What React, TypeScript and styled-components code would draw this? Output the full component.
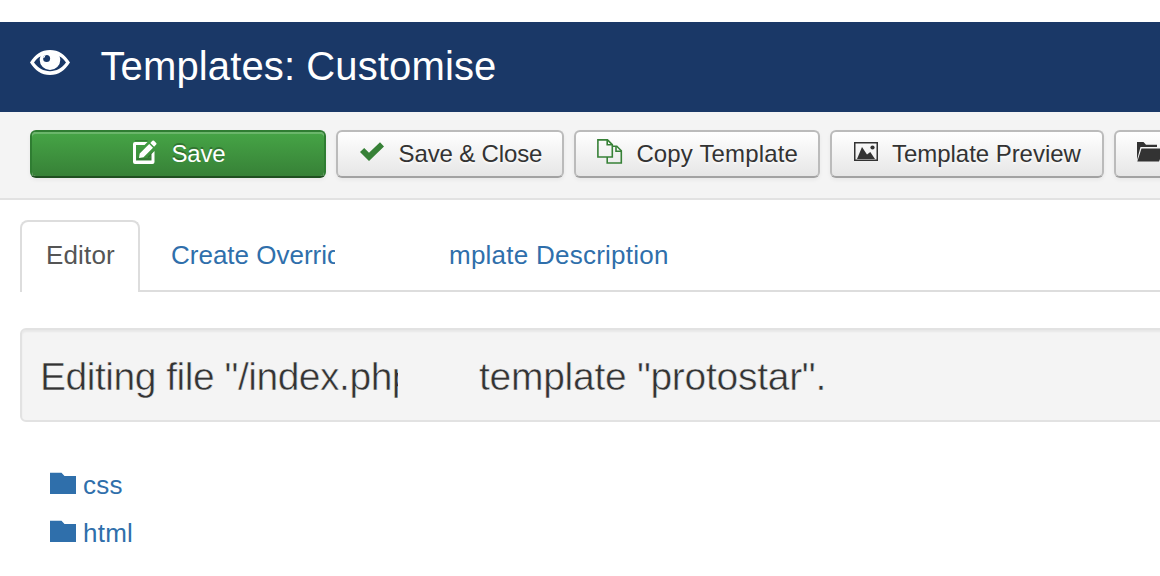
import React from 'react';
import styled, { createGlobalStyle, css } from 'styled-components';

const GlobalStyle = createGlobalStyle`
  * { box-sizing: border-box; }
  html, body { margin: 0; padding: 0; }
  body {
    background: #fff;
    color: #333;
    font-family: "Liberation Sans", Arial, Helvetica, sans-serif;
    font-size: 26px;
    overflow: hidden;
  }
`;

const Page = styled.div`
  width: 1160px;
  height: 576px;
  padding-top: 22px;
  overflow: hidden;
`;

const Header = styled.header`
  display: flex;
  align-items: flex-start;
  height: 90px;
  padding-left: 30px;
  background: #1a3867;
  color: #fff;
`;

const EyeSlot = styled.span`
  display: flex;
  width: 70.5px;
  padding-top: 28px;
`;

const Title = styled.h1`
  margin: 0;
  font-size: 40px;
  font-weight: 400;
  line-height: 88px;
  letter-spacing: 0.12px;
  white-space: nowrap;
`;

const Toolbar = styled.div`
  display: flex;
  gap: 10px;
  height: 88px;
  padding: 18px 0 0 30px;
  background: #f4f4f4;
  border-bottom: 2px solid #e2e2e2;
`;

const Button = styled.button<{ $width: number; $pad: number; $primary?: boolean }>`
  display: flex;
  flex: none;
  align-items: flex-start;
  width: ${(p) => p.$width}px;
  height: 48px;
  margin: 0;
  padding: 0 0 0 ${(p) => p.$pad - 2}px;
  border: 2px solid #bbb;
  border-bottom-color: #a2a2a2;
  border-radius: 6px;
  background: linear-gradient(to bottom, #fff, #e6e6e6) padding-box;
  box-shadow: inset 0 2px 0 rgba(255, 255, 255, 0.2), 0 2px 4px rgba(0, 0, 0, 0.05);
  color: #333;
  font: inherit;
  font-size: 24px;
  line-height: 44px;
  text-shadow: 0 2px 2px rgba(255, 255, 255, 0.75);
  ${(p) =>
    p.$primary &&
    css`
      border-color: #2f7d32;
      border-bottom-color: #1f4f20;
      background: linear-gradient(to bottom, #46a546, #378137) padding-box;
      color: #fff;
      text-shadow: 0 -2px 0 rgba(0, 0, 0, 0.25);
    `}
`;

const ButtonIcon = styled.span<{ $slot: number; $top: number }>`
  display: flex;
  flex: none;
  width: ${(p) => p.$slot}px;
  padding-top: ${(p) => p.$top}px;
`;

const Label = styled.span<{ $spacing?: number }>`
  letter-spacing: ${(p) => p.$spacing ?? 0}px;
  white-space: nowrap;
`;

const Tabs = styled.nav`
  display: flex;
  height: 72px;
  margin: 20px 0 0 20px;
  box-shadow: inset 0 -2px 0 #ddd;
  line-height: 66px;
`;

const ActiveTab = styled.a`
  width: 120px;
  padding-left: 24px;
  border: 2px solid #ddd;
  border-bottom: 0;
  border-radius: 8px 8px 0 0;
  background: #fff;
  color: #555;
`;

const TabLink = styled.a<{ $width: number; $gap: number }>`
  width: ${(p) => p.$width}px;
  height: 68px;
  margin-left: ${(p) => p.$gap}px;
  padding-top: 2px;
  overflow: hidden;
  color: #2f6fab;
`;

const Well = styled.section`
  display: flex;
  height: 94px;
  margin: 36px -10px 0 20px;
  padding-left: 18px;
  border: 2px solid #e2e2e2;
  border-radius: 6px;
  background: #f4f4f4;
  box-shadow: inset 0 2px 2px rgba(0, 0, 0, 0.05);
  font-size: 39px;
  line-height: 93px;
`;

const WellText = styled.span<{ $width: number; $spacing: number; $gap?: number }>`
  flex: none;
  width: ${(p) => p.$width}px;
  height: 90px;
  margin-left: ${(p) => p.$gap ?? 0}px;
  overflow: hidden;
  letter-spacing: ${(p) => p.$spacing}px;
  white-space: nowrap;
  -webkit-text-stroke: 0.5px #f4f4f4;
`;

const Tree = styled.ul`
  margin: 39px 0 0;
  padding: 0 0 0 50px;
  list-style: none;
`;

const TreeItem = styled.li`
  display: flex;
  height: 48px;
  color: #2f6fab;
  line-height: 48px;
`;

const FolderSlot = styled.span`
  display: flex;
  width: 33px;
  padding-top: 11px;
`;

const EyeIcon = () => (
  <svg width="40" height="26" viewBox="0 0 40 26">
    <path
      fill="#fff"
      fillRule="evenodd"
      d="M0 12.5C5 4.500 11.500 0 20 0S35 4.500 40 12.500C35 20.500 28.500 25 20 25S5 20.500 0 12.500ZM4 12.500C8.200 18 13.500 21.200 20 21.200S31.800 18 36 12.500C34.400 10 32.200 7.600 29.400 6.200Q30.300 8 30.300 10A10.300 10 0 0 1 9.700 10Q9.700 8 10.600 6.200C7.800 7.600 5.600 10 4 12.500Z"
    />
    <circle cx="16.600" cy="8.500" r="3.500" fill="#1a3867" />
    <path d="M13.100 8.500A3.500 3.500 0 0 1 16.600 5A2 2 0 0 0 14.800 7.200Z" fill="#fff" />
  </svg>
);

const EditIcon = () => (
  <svg width="24" height="25" viewBox="0 0 24 25">
    <path d="M14.500 1H2M15 18L18.500 14.500V19.500H4" transform="translate(0 -.5)" fill="none" stroke="#000" strokeOpacity=".2" strokeWidth="1.600" />
    <path
      fill="#fff"
      d="M2 2H14.500L11.500 5H3V20.500H18.500V14L21.500 11V22Q21.500 24 19.500 24H2Q0 24 0 22V4Q0 2 2 2Z"
    />
    <path fill="#fff" d="M16.200 4L20 7.800L10.500 17.300L6 18L6.700 13.500ZM17.300 2.900L19.400.8Q20.200 0 21 .8L23.200 3Q24 3.800 23.200 4.600L21.100 6.700Z" />
  </svg>
);

const CheckIcon = () => (
  <svg width="24" height="20" viewBox="0 0 24 20">
    <path fill="#378137" d="M0 10L4.200 6L9 10.800L20 .3L24 4.400L9 19Z" />
  </svg>
);

const CopyIcon = () => (
  <svg width="26" height="26" viewBox="0 0 26 26" fill="none" stroke="#378137" strokeWidth="1.600">
    <path d="M10.200 18V24H24.300V11.800L19.800 7.300H15.300" />
    <path d="M.9.900H10.500L15.300 5.600V18H.9Z" />
    <path d="M10.200.9V5.800H15.300M19 7.300V12.200H24.300" />
  </svg>
);

const ImageIcon = () => (
  <svg width="24" height="19" viewBox="0 0 24 19">
    <rect x=".75" y=".75" width="22.500" height="17.500" fill="none" stroke="#333" strokeWidth="1.500" />
    <path fill="#333" d="M3 17L8 5L13 12.500L16.300 10L21 17Z" />
    <circle cx="18.500" cy="5.500" r="2.100" fill="#333" />
  </svg>
);

const FolderOpenIcon = () => (
  <svg width="27" height="20" viewBox="0 0 27 20">
    <path fill="#333" d="M0 18V0H6.500L9 2.800H20V5H3.500Z" />
    <path fill="#333" d="M4.500 6.500H27L22 19.500H.3Z" />
  </svg>
);

const FolderIcon = () => (
  <svg width="26" height="22" viewBox="0 0 26 22">
    <path fill="#2f6fab" d="M0 .7H11.500L14.500 4H26V22H0Z" />
  </svg>
);

const folders = ['css', 'html'];

export default function App() {
  return (
    <Page>
      <GlobalStyle />
      <Header>
        <EyeSlot><EyeIcon /></EyeSlot>
        <Title>Templates: Customise</Title>
      </Header>
      <Toolbar>
        <Button $width={296} $pad={103} $primary>
          <ButtonIcon $slot={38.5} $top={8}><EditIcon /></ButtonIcon>
          <Label $spacing={-0.2}>Save</Label>
        </Button>
        <Button $width={228} $pad={24}>
          <ButtonIcon $slot={38.6} $top={10}><CheckIcon /></ButtonIcon>
          <Label $spacing={-0.15}>Save &amp; Close</Label>
        </Button>
        <Button $width={246} $pad={23}>
          <ButtonIcon $slot={39.4} $top={7}><CopyIcon /></ButtonIcon>
          <Label $spacing={0.15}>Copy Template</Label>
        </Button>
        <Button $width={274} $pad={24}>
          <ButtonIcon $slot={38} $top={10}><ImageIcon /></ButtonIcon>
          <Label $spacing={-0.04}>Template Preview</Label>
        </Button>
        <Button $width={240} $pad={23}>
          <ButtonIcon $slot={38} $top={10}><FolderOpenIcon /></ButtonIcon>
        </Button>
      </Toolbar>
      <Tabs>
        <ActiveTab><Label $spacing={0.15}>Editor</Label></ActiveTab>
        <TabLink $gap={31} $width={164}><Label>Create Overrid</Label></TabLink>
        <TabLink $gap={114} $width={240}><Label $spacing={0.24}>mplate Description</Label></TabLink>
      </Tabs>
      <Well>
        <WellText $width={358} $spacing={-0.48}>Editing file "/index.php</WellText>
        <WellText $gap={81} $width={500} $spacing={-0.28}>template "protostar".</WellText>
      </Well>
      <Tree>
        {folders.map((name) => (
          <TreeItem key={name}>
            <FolderSlot><FolderIcon /></FolderSlot>
            <Label $spacing={0.25}>{name}</Label>
          </TreeItem>
        ))}
      </Tree>
    </Page>
  );
}
